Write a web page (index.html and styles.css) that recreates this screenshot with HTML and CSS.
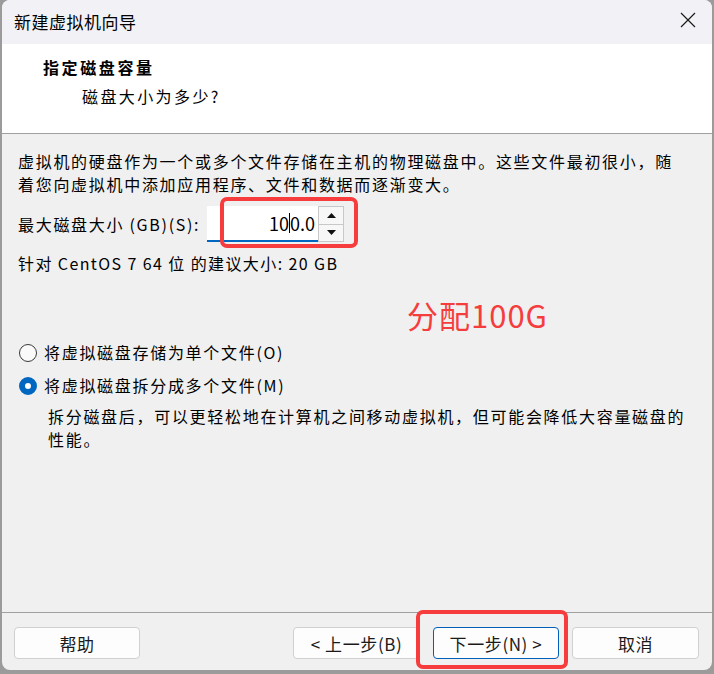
FILE: index.html
```html
<!DOCTYPE html>
<html lang="zh-CN">
<head>
<meta charset="utf-8">
<title>新建虚拟机向导</title>
<link rel="stylesheet" href="styles.css">
</head>
<body>
<div class="window">
  <div class="titlebar">
    <span class="title">新建虚拟机向导</span>
    <svg class="close" width="16" height="16" viewBox="0 0 16 16"><path d="M1 1 L15 15 M15 1 L1 15" stroke="#1a1a1a" stroke-width="1.2" fill="none"/></svg>
  </div>
  <div class="header">
    <div class="h-title">指定磁盘容量</div>
    <div class="h-sub">磁盘大小为多少?</div>
  </div>
  <div class="content">
    <p class="para">虚拟机的硬盘作为一个或多个文件存储在主机的物理磁盘中。这些文件最初很小，随<br>着您向虚拟机中添加应用程序、文件和数据而逐渐变大。</p>
    <div class="field">
      <span class="label">最大磁盘大小 (GB)(S):</span>
      <div class="spin">
        <div class="spin-input"><span>10</span><span class="caret"></span><span>0.0</span></div>
        <div class="spin-btns">
          <div class="spin-btn"><svg width="9" height="5" viewBox="0 0 9 5"><path d="M4.5 0 L9 5 L0 5 Z" fill="#111"/></svg></div>
          <div class="spin-btn"><svg width="9" height="5" viewBox="0 0 9 5"><path d="M0 0 L9 0 L4.5 5 Z" fill="#111"/></svg></div>
        </div>
      </div>
    </div>
    <p class="rec">针对 CentOS 7 64 位 的建议大小: 20 GB</p>
    <div class="radio-row first"><span class="radio"></span><span>将虚拟磁盘存储为单个文件(O)</span></div>
    <div class="radio-row"><span class="radio on"></span><span>将虚拟磁盘拆分成多个文件(M)</span></div>
    <p class="desc">拆分磁盘后，可以更轻松地在计算机之间移动虚拟机，但可能会降低大容量磁盘的<br>性能。</p>
    <div class="note">分配100G</div>
    <div class="mark mark-input"></div>
  </div>
  <div class="footer">
    <button class="btn help">帮助</button>
    <div class="nav">
      <button class="btn">&lt; 上一步(B)</button>
      <button class="btn primary">下一步(N) &gt;</button>
      <button class="btn">取消</button>
    </div>
    <div class="mark mark-next"></div>
  </div>
</div>
</body>
</html>
```

FILE: styles.css
```css
* { box-sizing: border-box; }
html, body { margin: 0; padding: 0; }
body {
  width: 714px;
  height: 674px;
  background: #9b9b9b;
  font-family: "Noto Sans CJK SC", "Noto Sans", sans-serif;
  color: #000;
  overflow: hidden;
}
.window {
  margin-left: 2px;
  width: 710px;
  height: 670px;
  border-radius: 8px;
  overflow: hidden;
  background: #f0f0f0;
  display: flex;
  flex-direction: column;
  position: relative;
}
.titlebar {
  height: 44px;
  background: #f2f2f6;
  display: flex;
  align-items: center;
  justify-content: space-between;
  padding: 0 16px 2px 12px;
}
.title { font-size: 17px; letter-spacing: 0.5px; }
.close { display: block; margin-top: -2px; }
.header {
  height: 90px;
  background: #fff;
  border-bottom: 1px solid #a0a0a0;
  padding: 13px 0 0 41px;
}
.h-title { font-size: 16px; font-weight: 700; line-height: 21px; letter-spacing: 2.6px; }
.h-sub { font-size: 16px; line-height: 21px; margin: 8px 0 0 39px; letter-spacing: 2.4px; }
.content {
  flex: 1;
  position: relative;
  padding: 16px 0 0 16px;
  font-size: 16px;
  letter-spacing: 1.7px;
}
.para, .rec, .desc { margin: 0; line-height: 23px; }
.field {
  display: flex;
  align-items: center;
  height: 36px;
  margin-top: 10px;
}
.label { width: 189px; }
.spin { display: flex; height: 36px; }
.spin-input {
  width: 111px;
  background: #fff;
  border-bottom: 2px solid #0067c0;
  display: flex;
  justify-content: flex-end;
  align-items: center;
  padding-right: 3px;
  font-size: 18px;
  letter-spacing: 0;
}
.caret { display: inline-block; width: 1px; height: 20px; background: #000; }
.spin-btns {
  width: 26px;
  display: flex;
  flex-direction: column;
  border: 1px solid #c8c8c8;
  background: #fff;
}
.spin-btn {
  flex: 1;
  display: flex;
  align-items: center;
  justify-content: center;
  background: #f7f7f7;
}
.spin-btn + .spin-btn { border-top: 1px solid #c8c8c8; }
.rec { margin-top: 10px; letter-spacing: 1.4px; }
.radio-row { display: flex; align-items: center; gap: 7px; line-height: 23px; margin-top: 10px; }
.radio-row.first { margin-top: 66px; }
.radio {
  width: 18px;
  height: 18px;
  border-radius: 50%;
  border: 1px solid #3a3a3a;
  background: #fafafa;
  flex: none;
  margin-left: 1px;
}
.radio.on {
  border: 6px solid #0067c0;
  background: #fff;
}
.desc { margin: 8px 0 0 30px; }
.note {
  position: absolute;
  left: 405px;
  top: 163px;
  font-size: 31px;
  line-height: 36px;
  color: #f53d3d;
  letter-spacing: 1px;
}
.mark {
  position: absolute;
  border: 4px solid #f63c3c;
  border-radius: 7px;
}
.mark-input { left: 218px; top: 63px; width: 138px; height: 51px; }
.footer {
  height: 58px;
  border-top: 1px solid #a0a0a0;
  display: flex;
  justify-content: space-between;
  align-items: flex-start;
  padding: 14px 13px 0 12px;
  position: relative;
}
.nav { display: flex; gap: 13px; }
.btn {
  width: 127px;
  height: 32px;
  background: #fdfdfd;
  border: 1px solid #d0d0d0;
  border-radius: 4px;
  font-family: "Noto Sans CJK SC", "Noto Sans", sans-serif;
  font-size: 17px;
  color: #1a1a1a;
  padding: 0;
  letter-spacing: 0.6px;
}
.btn.help { width: 126px; }
.btn.primary { border-color: #005fb8; width: 126px; }
.mark-next { left: 414px; top: -3px; width: 152px; height: 59px; }
```
